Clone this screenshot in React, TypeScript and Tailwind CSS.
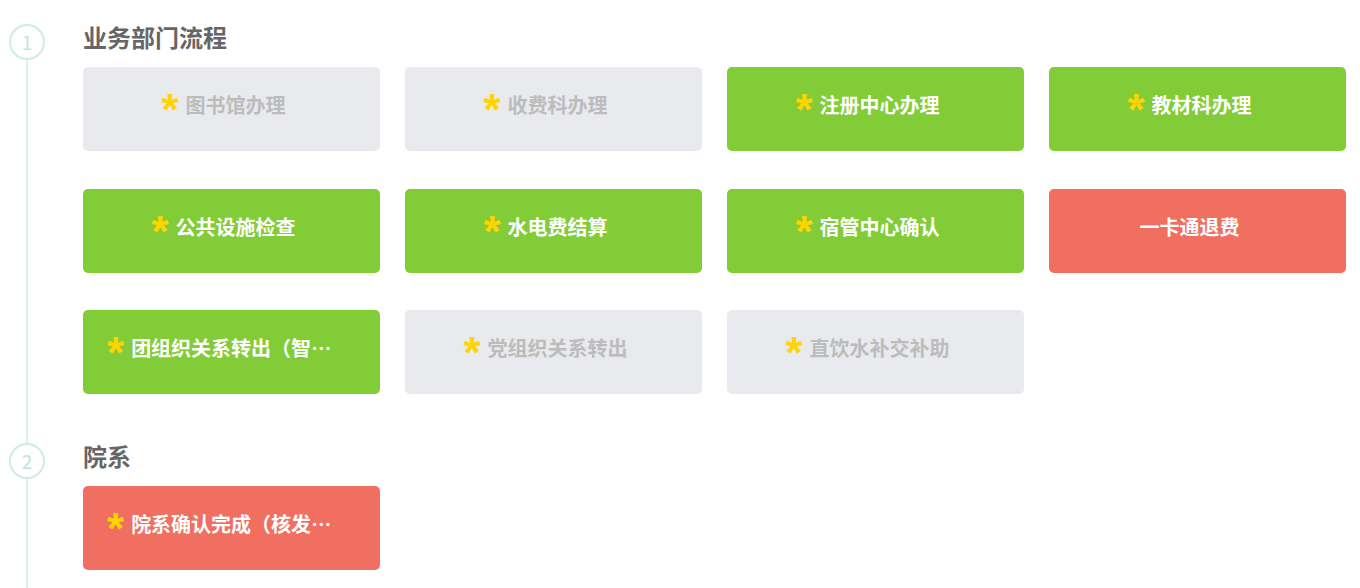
type Status = "gray" | "green" | "red";

interface Step {
  name: string;
  status: Status;
  required: boolean;
}

const sections: { title: string; steps: Step[] }[] = [
  {
    title: "业务部门流程",
    steps: [
      { name: "图书馆办理", status: "gray", required: true },
      { name: "收费科办理", status: "gray", required: true },
      { name: "注册中心办理", status: "green", required: true },
      { name: "教材科办理", status: "green", required: true },
      { name: "公共设施检查", status: "green", required: true },
      { name: "水电费结算", status: "green", required: true },
      { name: "宿管中心确认", status: "green", required: true },
      { name: "一卡通退费", status: "red", required: false },
      { name: "团组织关系转出（智慧团建）", status: "green", required: true },
      { name: "党组织关系转出", status: "gray", required: true },
      { name: "直饮水补交补助", status: "gray", required: true },
    ],
  },
  {
    title: "院系",
    steps: [{ name: "院系确认完成（核发离校单）", status: "red", required: true }],
  },
];

const cardColors: Record<Status, string> = {
  gray: "bg-[#e9eaed] text-[#bcbcbc]",
  green: "bg-[#82cc37] text-white",
  red: "bg-[#f06f61] text-white",
};

function StepCard({ step }: { step: Step }) {
  return (
    <div
      className={`h-[84px] rounded-[5px] pl-6 pr-10 pb-[8px] flex items-center justify-center ${cardColors[step.status]}`}
    >
      <div className="flex items-center min-w-0">
        {step.required && (
          <span className="text-[#ffd400] text-[44px] leading-none font-bold mr-[7px] translate-y-[5px] shrink-0 font-['Liberation_Sans',Arial,sans-serif]">
            *
          </span>
        )}
        <span className="text-[20px] leading-[30px] font-bold truncate">{step.name}</span>
      </div>
    </div>
  );
}

export default function App() {
  return (
    <div
      className="w-[1360px] h-[588px] overflow-hidden bg-white pl-[9px] pt-[24px]"
      style={{ fontFamily: '"Noto Sans CJK SC", "Noto Sans", sans-serif' }}
    >
      {sections.map((section, i) => (
        <div key={section.title} className="flex">
          {/* timeline */}
          <div className="w-[36px] flex flex-col items-center shrink-0">
            <div className="w-[36px] h-[36px] rounded-full border-2 border-[#cdebe8] flex items-center justify-center text-[#bfe4e0] text-[19px] shrink-0">
              {i + 1}
            </div>
            <div className="w-[2px] flex-1 bg-[#ddf0ee] min-h-[200px]" />
          </div>

          <div className={`flex-1 ml-[38px] pr-[14px] ${i === 0 ? "pb-[49px]" : ""}`}>
            <div className="h-[36px] pb-[10px] flex items-center text-[24px] leading-none font-bold text-[#666666]">
              {section.title}
            </div>
            <div className="mt-[7px] grid grid-cols-4 gap-x-[25px] gap-y-[37.5px]">
              {section.steps.map((step) => (
                <StepCard key={step.name} step={step} />
              ))}
            </div>
          </div>
        </div>
      ))}
    </div>
  );
}
